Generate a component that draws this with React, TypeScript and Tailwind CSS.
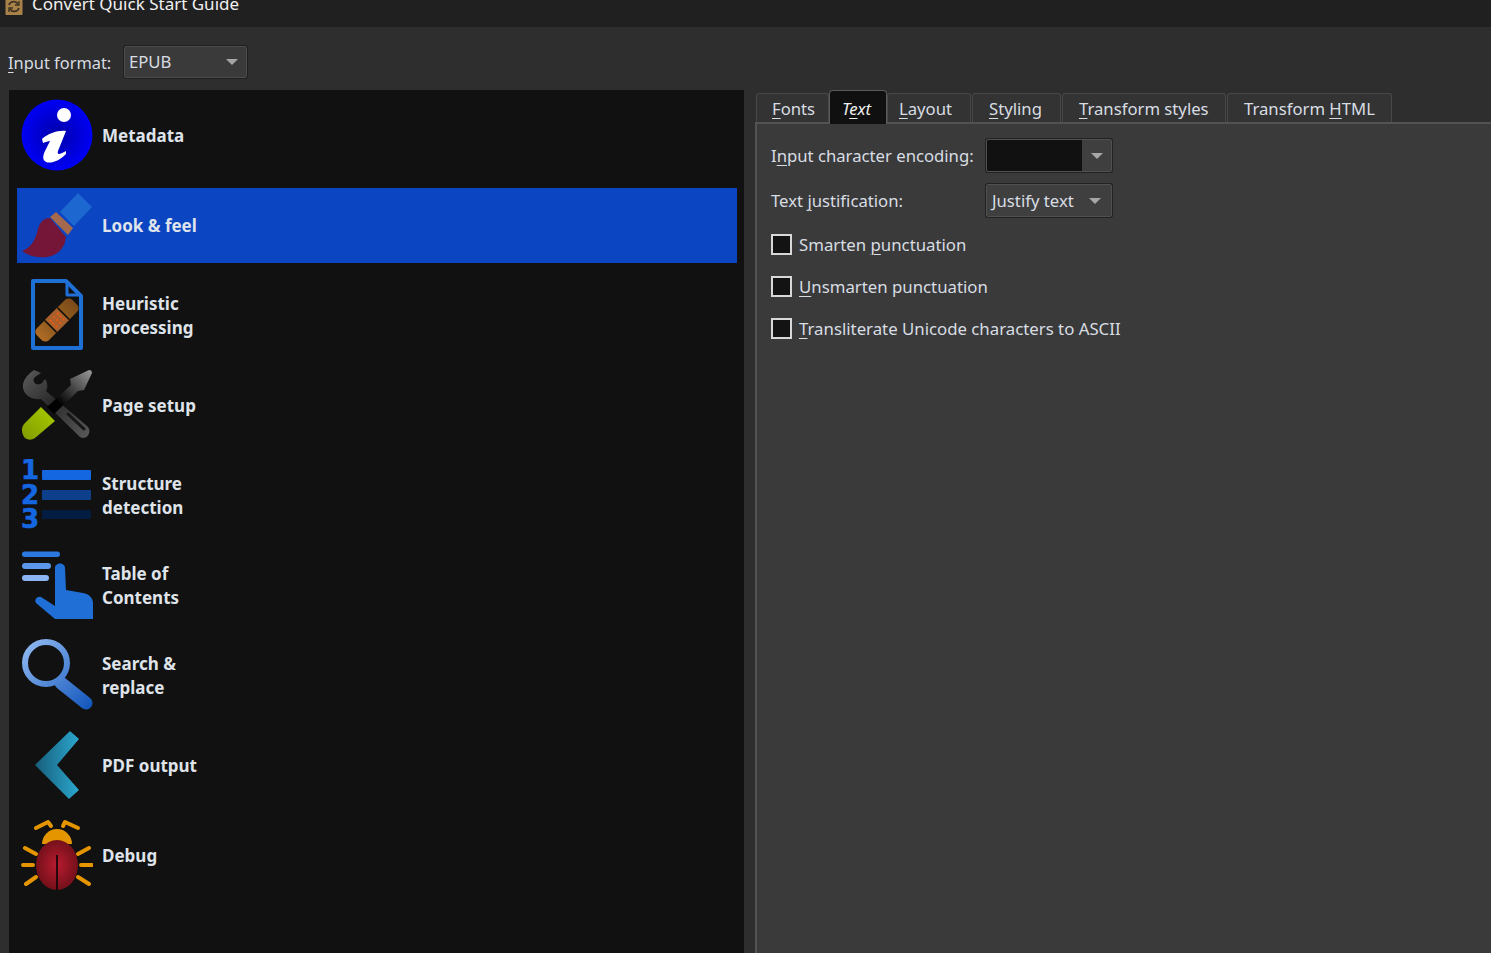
import type { ReactNode } from "react";

const font = { fontFamily: '"Noto Sans", "Open Sans", sans-serif' };

const InfoIcon = () => (
  <svg viewBox="0 0 72 72" className="w-[72px] h-[72px] shrink-0">
    <defs>
      <radialGradient id="infoFill" cx="50%" cy="50%" r="50%">
        <stop offset="0%" stopColor="#0000a8" />
        <stop offset="100%" stopColor="#0000f5" />
      </radialGradient>
    </defs>
    <circle cx="36" cy="36" r="35.5" fill="url(#infoFill)" />
    <circle cx="43" cy="16" r="7" fill="#fff" />
    <path d="M21 40C28 34 37 31 45 32L37 52C36 56 38 56 45 52L45 55C38 62 30 65 25 63C21 61 22 56 24 52L29 42C27 42 25 43 22 44Z" fill="#fff" />
  </svg>
);

const BrushIcon = () => (
  <svg viewBox="0 0 72 72" className="w-[72px] h-[72px] shrink-0">
    <path d="M39 23L57 4L71 18L53 37Z" fill="#1c68d0" />
    <path d="M29 28L35 23L52 39L47 46Z" fill="#a5694d" />
    <path d="M1 62C12 58 15 48 17 40C19 32 24 29 29 29L45 48C44 58 38 66 26 68C16 69 8 67 1 62Z" fill="#751538" />
  </svg>
);

const PatchIcon = () => (
  <svg viewBox="0 0 72 72" className="w-[72px] h-[72px] shrink-0">
    <defs>
      <linearGradient id="patchFill" x1="0" y1="0" x2="1" y2="0">
        <stop offset="0%" stopColor="#b06c26" />
        <stop offset="35%" stopColor="#8f5a1e" />
        <stop offset="65%" stopColor="#8f5a1e" />
        <stop offset="100%" stopColor="#7a4a18" />
      </linearGradient>
    </defs>
    <path d="M12 2H45L60 17V69H12Z" fill="none" stroke="#1e6fd6" strokeWidth="4" strokeLinejoin="round" />
    <path d="M46 4V16H59" fill="none" stroke="#1e6fd6" strokeWidth="3" strokeLinejoin="round" />
    <g transform="rotate(-45 36 41)">
      <rect x="11" y="32.5" width="50" height="17" rx="5" fill="url(#patchFill)" />
      <rect x="27" y="32.5" width="18" height="17" fill="#a8602c" />
      <path d="M27 32.5V49.5M45 32.5V49.5" stroke="#17100a" strokeWidth="1.5" />
      <g fill="#f05a10">
        <circle cx="31" cy="37" r="1.1" /><circle cx="36" cy="37" r="1.1" /><circle cx="41" cy="37" r="1.1" />
        <circle cx="31" cy="41" r="1.1" /><circle cx="36" cy="41" r="1.1" /><circle cx="41" cy="41" r="1.1" />
        <circle cx="31" cy="45" r="1.1" /><circle cx="36" cy="45" r="1.1" /><circle cx="41" cy="45" r="1.1" />
      </g>
    </g>
  </svg>
);

const ToolsIcon = () => (
  <svg viewBox="0 0 72 72" className="w-[72px] h-[72px] shrink-0">
    <defs>
      <linearGradient id="toolGrey" x1="0" y1="0" x2="1" y2="1">
        <stop offset="0%" stopColor="#5c5c5c" />
        <stop offset="45%" stopColor="#2a2a2a" />
        <stop offset="100%" stopColor="#5a5a5a" />
      </linearGradient>
      <linearGradient id="bladeGrey" x1="1" y1="0" x2="0" y2="1">
        <stop offset="0%" stopColor="#9a9a9a" />
        <stop offset="75%" stopColor="#000000" />
      </linearGradient>
      <linearGradient id="gripGreen" x1="1" y1="0" x2="0" y2="1">
        <stop offset="0%" stopColor="#aacc00" />
        <stop offset="100%" stopColor="#7f9c00" />
      </linearGradient>
    </defs>
    <path d="M13 1L20 4L14 8C12 10 12 13 15 15C17 16 20 15 21 14L24 10C27 14 27 19 25 22L66 57C72 62 66 72 59 68L20 30C14 31 8 29 4 24C0 18 1 9 13 1Z" fill="url(#toolGrey)" />
    <path d="M47 45L63 60" stroke="#161616" strokeWidth="3" strokeLinecap="round" />
    <path d="M49 10L68 1Q71 1 71 4L63 21L57 22L33 45L26 38L50 16Z" fill="url(#bladeGrey)" />
    <path d="M20 38L34 52L14 69C8 73 3 69 2 66C0 61 1 57 4 54Z" fill="url(#gripGreen)" />
  </svg>
);

const ListIcon = () => (
  <svg viewBox="0 0 72 72" className="w-[72px] h-[72px] shrink-0">
    <g fill="#1467e0" stroke="#1467e0" strokeWidth="0.6" fontFamily="DejaVu Sans, sans-serif" fontWeight="700" fontSize="26" textAnchor="middle">
      <text x="9" y="20">1</text>
      <text x="9" y="45">2</text>
      <text x="9" y="69">3</text>
    </g>
    <rect x="21" y="11" width="49" height="10" rx="1" fill="#1467e0" />
    <rect x="21" y="31" width="49" height="10" rx="1" fill="#0e3f8a" />
    <rect x="21" y="51" width="49" height="9" rx="1" fill="#031c42" />
  </svg>
);

const TocIcon = () => (
  <svg viewBox="0 0 72 72" className="w-[72px] h-[72px] shrink-0">
    <rect x="1" y="2.5" width="38" height="5.5" rx="2.7" fill="#2b78de" />
    <rect x="1" y="14" width="29" height="6" rx="3" fill="#5b97ea" />
    <rect x="1" y="26" width="27" height="6" rx="3" fill="#8ab5f2" />
    <path d="M34 19C34 13 44 13 44 19L45 41L62 44C68 45 72 49 72 54V70H34L15 54C13 51 16 47 20 48L34 57Z" fill="#1f6fd6" />
  </svg>
);

const SearchIcon = () => (
  <svg viewBox="0 0 72 72" className="w-[72px] h-[72px] shrink-0">
    <defs>
      <linearGradient id="lensFill" gradientUnits="userSpaceOnUse" x1="4" y1="4" x2="68" y2="68">
        <stop offset="0%" stopColor="#8fb8f0" />
        <stop offset="100%" stopColor="#1558bd" />
      </linearGradient>
    </defs>
    <circle cx="25" cy="24" r="21" fill="none" stroke="url(#lensFill)" strokeWidth="6" />
    <path d="M40 44L65 64" stroke="url(#lensFill)" strokeWidth="13" strokeLinecap="round" />
  </svg>
);

const ChevronIcon = () => (
  <svg viewBox="0 0 72 72" className="w-[72px] h-[72px] shrink-0">
    <defs>
      <linearGradient id="chevFill" gradientUnits="userSpaceOnUse" x1="15" y1="36" x2="57" y2="36">
        <stop offset="0%" stopColor="#175f7c" />
        <stop offset="100%" stopColor="#2ba5cc" />
      </linearGradient>
    </defs>
    <path d="M15 36L49 3L57 10L35 36L57 61L48 69Z" fill="url(#chevFill)" stroke="url(#chevFill)" strokeWidth="1.5" strokeLinejoin="round" />
  </svg>
);

const BugIcon = () => (
  <svg viewBox="0 0 72 72" className="w-[72px] h-[72px] shrink-0">
    <defs>
      <radialGradient id="bugFill" cx="50%" cy="50%" r="55%">
        <stop offset="0%" stopColor="#b81c30" />
        <stop offset="100%" stopColor="#6e0f18" />
      </radialGradient>
    </defs>
    <path d="M21 25A15 15 0 0 1 51 25Z" fill="#e59500" />
    <g stroke="#e59500" strokeWidth="4" strokeLinecap="round" strokeLinejoin="round" fill="none">
      <path d="M15 9L27 3L30 7" />
      <path d="M57 9L44 3L42 7" />
      <path d="M4 29L15 35M68 29L57 35M2 46H12M71 46H60M5 65L15 58M68 65L57 58" />
    </g>
    <ellipse cx="36" cy="46" rx="21" ry="25" fill="url(#bugFill)" />
    <path d="M36 36V71" stroke="#1a0508" strokeWidth="1.8" />
  </svg>
);

const AppIcon = () => (
  <svg viewBox="0 0 18 18" className="w-[18px] h-[18px] shrink-0">
    <rect x="0.5" y="0" width="17" height="17" rx="1" fill="#a9824a" />
    <path d="M4 7A5 5 0 0 1 13 6M14 10A5 5 0 0 1 5 11" fill="none" stroke="#3d3222" strokeWidth="1.7" />
    <path d="M14 3V7H10M4 14V10H8" fill="none" stroke="#3d3222" strokeWidth="1.4" />
  </svg>
);

const Caret = () => (
  <svg viewBox="0 0 12 6" className="w-[12px] h-[6px] shrink-0">
    <path d="M0 0H12L6 6Z" fill="#a6a6a6" />
  </svg>
);

const categories: { label: ReactNode; icon: ReactNode; active?: boolean }[] = [
  { label: "Metadata", icon: <InfoIcon /> },
  { label: "Look & feel", icon: <BrushIcon />, active: true },
  { label: <>Heuristic<br />processing</>, icon: <PatchIcon /> },
  { label: "Page setup", icon: <ToolsIcon /> },
  { label: <>Structure<br />detection</>, icon: <ListIcon /> },
  { label: <>Table of<br />Contents</>, icon: <TocIcon /> },
  { label: <>Search &amp;<br />replace</>, icon: <SearchIcon /> },
  { label: "PDF output", icon: <ChevronIcon /> },
  { label: "Debug", icon: <BugIcon /> },
];

const U = ({ children }: { children: ReactNode }) => (
  <span className="underline underline-offset-[3px] decoration-1">{children}</span>
);

// tab boxes and text starts are irregular in the screenshot, so each one carries its own
const tabs: { label: ReactNode; box: string; active?: boolean }[] = [
  { label: <><U>F</U>onts</>, box: "w-[73px] pl-[15px]" },
  { label: <span className="italic">T<U>e</U>xt</span>, box: "w-[58px] pl-[12px]", active: true },
  { label: <><U>L</U>ayout</>, box: "w-[84px] pl-[11px] mr-[1px]" },
  { label: <><U>S</U>tyling</>, box: "w-[89px] pl-[16px] mr-[1px]" },
  { label: <><U>T</U>ransform styles</>, box: "w-[164px] pl-[16px] mr-[1px]" },
  { label: <>Transform <U>H</U>TML</>, box: "w-[165px] pl-[16px]" },
];

const checks: ReactNode[] = [
  <>Smarten <U>p</U>unctuation</>,
  <><U>U</U>nsmarten punctuation</>,
  <><U>T</U>ransliterate Unicode characters to ASCII</>,
];

export default function App() {
  return (
    <div style={font} className="w-[1491px] h-[953px] overflow-hidden flex flex-col bg-[#2e2e2e] text-[#d8dde3] text-[16.7px] leading-[24px]">
      <div className="h-[27px] shrink-0 bg-[#202020] flex items-end pb-[11px] pl-[5px] gap-[9px] overflow-hidden">
        <AppIcon />
        <span className="text-[#f0f0f0] text-[17px] whitespace-nowrap">Convert Quick Start Guide</span>
      </div>

      <div className="h-[63px] shrink-0 pl-[8px] pt-[18px] flex items-start">
        <span className="w-[115px] h-[34px] pt-[1px] flex items-center text-[16.4px]"><span><U>I</U>nput format:</span></span>
        <div className="w-[125px] h-[34px] rounded-[3px] border-2 border-[#1f1f1f] outline outline-1 outline-[#4c4c4c] -outline-offset-2 bg-[#3a3a3a] flex items-center justify-between pl-[4px] pr-[8px]">
          <span>EPUB</span>
          <Caret />
        </div>
      </div>

      <div className="flex-1 min-h-0 flex pl-[9px] gap-[11px]">
        <div className="w-[735px] shrink-0 bg-[#111111] pt-[8px] pl-[8px] pr-[7px] flex flex-col gap-[15px]">
          {categories.map((c, i) => (
            <div key={i} className={`h-[75px] shrink-0 flex items-center pl-[4px] gap-[9px] font-bold text-[17px] text-[#dfe3ea] ${c.active ? "bg-[#0b45c2]" : ""}`}>
              <div className="-mt-[1px] shrink-0 flex">{c.icon}</div>
              <div>{c.label}</div>
            </div>
          ))}
        </div>

        <div className="flex-1 flex flex-col min-w-0">
          <div className="h-[32px] shrink-0 flex items-end pl-[1px]">
            {tabs.map((t, i) => (
              <div
                key={i}
                className={
                  t.active
                    ? `${t.box} h-[34px] pt-[3px] -mb-[2px] z-10 shrink-0 rounded-t-[4px] border border-b-0 border-[#5a5a5a] bg-[#101010] text-[#eeeeee] flex items-center`
                    : `${t.box} h-[29px] pt-[2px] shrink-0 rounded-t-[3px] border border-b-0 border-[#484848] bg-[#333333] flex items-center`
                }
              >
                <span className="whitespace-nowrap">{t.label}</span>
              </div>
            ))}
          </div>
          <div className="flex-1 bg-[#3a3a3a] border-t-2 border-l-2 border-[#535353] pl-[14px] pt-[14px] flex flex-col">
            <div className="flex items-center h-[35px]">
              <span className="w-[214px] shrink-0 pt-[1px]">I<U>n</U>put character encoding:</span>
              <div className="w-[128px] h-[35px] rounded-[3px] border-2 border-[#222222] outline outline-1 outline-[#505050] -outline-offset-2 bg-[#3f3f3f] flex items-center overflow-hidden">
                <div className="w-[95px] h-full bg-[#111111]" />
                <div className="flex-1 flex justify-center"><Caret /></div>
              </div>
            </div>
            <div className="flex items-center h-[35px] mt-[10px]">
              <span className="w-[214px] shrink-0 pt-[1px]">Text <U>j</U>ustification:</span>
              <div className="w-[128px] h-[35px] rounded-[3px] border-2 border-[#222222] outline outline-1 outline-[#505050] -outline-offset-2 bg-[#3f3f3f] flex items-center justify-between pl-[5px] pr-[10px]">
                <span>Justify text</span>
                <Caret />
              </div>
            </div>
            <div className="mt-[16px] flex flex-col gap-[21px]">
              {checks.map((c, i) => (
                <div key={i} className="flex items-center h-[21px] gap-[7px]">
                  <div className="w-[21px] h-[21px] shrink-0 border-2 border-[#d8d8d8] bg-[#131313]" />
                  <span className="whitespace-nowrap pt-[1px] text-[16.8px]">{c}</span>
                </div>
              ))}
            </div>
          </div>
        </div>
      </div>
    </div>
  );
}
